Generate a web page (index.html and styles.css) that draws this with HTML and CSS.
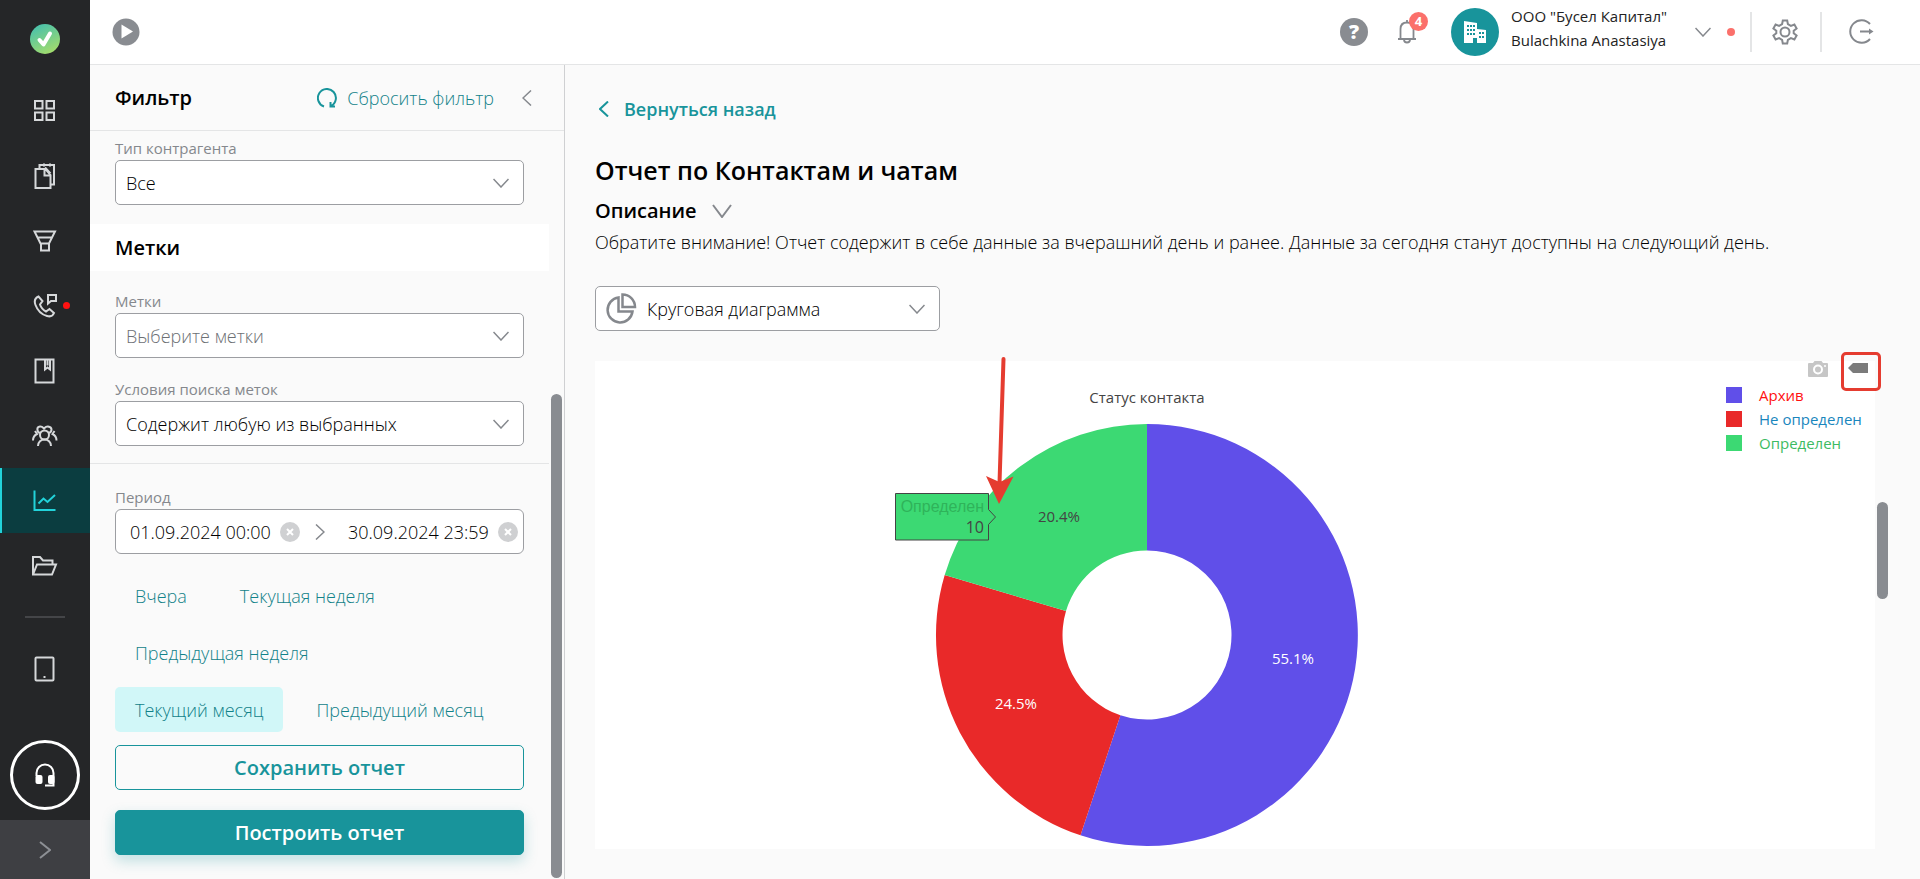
FILE: index.html
```html
<!DOCTYPE html>
<html lang="ru">
<head>
    <meta charset="UTF-8">
    <meta name="viewport" content="width=device-width, initial-scale=1.0">
    <title>Отчет по Контактам и чатам</title>
    <link rel="stylesheet" href="styles.css">
</head>
<body>
    <nav class="sidebar">
        <a href="#" class="logo" aria-label="Главная">
            <svg width="30" height="30" viewBox="0 0 30 30">
                <defs>
                    <linearGradient id="logoFill" x1="0.2" y1="0" x2="0.7" y2="1">
                        <stop offset="0" stop-color="#45bfae"/>
                        <stop offset="1" stop-color="#a5dd6b"/>
                    </linearGradient>
                </defs>
                <circle cx="15" cy="15" r="15" fill="url(#logoFill)"/>
                <path d="M9.500 16l4 4.500L20 9.500" fill="none" stroke="#fff" stroke-width="4" stroke-linecap="round" stroke-linejoin="round"/>
            </svg>
        </a>
        <a href="#" class="nav-item" aria-label="Рабочий стол">
            <svg width="26" height="26" viewBox="0 0 26 26"><path d="M3 3h7.500v7.500H3zM14.500 3H22v7.500h-7.500zM3 14.500h7.500V22H3zM14.500 14.500H22V22h-7.500z"/></svg>
        </a>
        <a href="#" class="nav-item" aria-label="Документы">
            <svg width="26" height="26" viewBox="0 0 26 26"><path d="M3.500 6h10l5 6v13h-15zM12.500 6v6.500h6M7.500 6V2H22v19.500h-3.500M12 .500v3M18 .500v3M13 4.500l5.500 6"/></svg>
        </a>
        <a href="#" class="nav-item" aria-label="Воронка">
            <svg width="26" height="26" viewBox="0 0 26 26"><path d="M2.500 3.500h20.500l-6 12H8.500zM5.500 9.500h14.500M9 15.500h8V22.500H9z"/></svg>
        </a>
        <a href="#" class="nav-item" aria-label="Звонки">
            <svg width="26" height="26" viewBox="0 0 26 26"><path d="M6.500 3.500C3 5 2 8 3.500 12c2 5.500 6 9.500 11.500 11 3.500 1 6-.500 7-3l-4.500-4-3.500 2.500c-3-1.500-5-4-6-7L10.500 8zM16 2h8v6h-5l-3 2.500z"/></svg>
            <span class="nav-dot"></span>
        </a>
        <a href="#" class="nav-item" aria-label="Справочник">
            <svg width="26" height="26" viewBox="0 0 26 26"><path d="M3.500 1.500h18v23h-18zM13 1.500v10l2.500-2 2.500 2v-10M15.500 1.500v6"/></svg>
        </a>
        <a href="#" class="nav-item" aria-label="Контакты">
            <svg width="26" height="26" viewBox="0 0 26 26"><circle cx="12.500" cy="12" r="4.500"/><path d="M6 23c0-4 3-6.500 6.500-6.500S19 19 19 23M8 10C5 9 4 4 8 3.500c2-.200 3 1 4 2 1-1 2-2.200 4-2C21 4 20 9 17 10M1 17.500c0-3 1-5 4-6.500l-2-3M24.500 17.500c0-3-1-5-4-6.500l2-3"/></svg>
        </a>
        <a href="#" class="nav-item active" aria-label="Отчеты">
            <svg width="26" height="26" viewBox="0 0 26 26"><path d="M2.500 2.500v19.500h21M6.500 15.500l5-5 4 3.500L23 7"/></svg>
        </a>
        <a href="#" class="nav-item" aria-label="Файлы">
            <svg width="26" height="26" viewBox="0 0 26 26"><path d="M1 21.500V4h7l3 3.500h9.500v4M1 21.500l4-10h19l-4 10z"/></svg>
        </a>
        <hr class="nav-line">
        <a href="#" class="nav-item" aria-label="Мобильная версия">
            <svg width="26" height="26" viewBox="0 0 26 26"><rect x="3.500" y="1.500" width="18" height="23" rx="1"/><path d="M11.500 21h2"/></svg>
        </a>
        <div class="nav-bottom">
            <button type="button" class="support" aria-label="Поддержка">
                <svg width="24" height="26" viewBox="0 0 24 26"><path d="M3.500 14v-3a8.500 8.500 0 0 1 17 0v12.500H12" fill="none" stroke="#fff" stroke-width="2"/><rect x="2.500" y="13" width="7" height="9" rx="2" fill="#fff"/><rect x="15" y="13" width="6.500" height="9" rx="2" fill="#fff"/></svg>
            </button>
            <button type="button" class="expand" aria-label="Развернуть меню">
                <svg width="12" height="18" viewBox="0 0 12 18"><path d="M1 1l10 8-10 8"/></svg>
            </button>
        </div>
    </nav>

    <div class="page">
        <header class="topbar">
            <button type="button" class="icon-btn" aria-label="Запустить">
                <svg width="28" height="28" viewBox="0 0 28 28"><circle cx="14" cy="14" r="13.500" fill="#898c91"/><path d="M9.500 6.500v14l11.500-7z" fill="#fff"/></svg>
            </button>
            <div class="topbar-right">
                <button type="button" class="help" aria-label="Помощь">?</button>
                <button type="button" class="bell" aria-label="Уведомления">
                    <svg width="20" height="28" viewBox="0 0 20 28"><path d="M1 21h18M3.500 21V11c0-4 2.500-6.500 6.500-6.500s6.500 2.500 6.500 6.500v10M10 4.500V2M7 21.500c0 4 6 4 6 0" fill="none" stroke="#85888d" stroke-width="1.800"/></svg>
                    <span class="badge">4</span>
                </button>
                <div class="avatar">
                    <svg width="24" height="24" viewBox="0 0 24 24"><path fill="#fff" d="M1 23V1l13 2v6l9 1v13h-9v-5h-4v5z"/><path stroke="#18949b" stroke-width="2" stroke-dasharray="2 1" d="M4 6h8M4 10h8M4 14h8M16 13h5M16 17h5"/></svg>
                </div>
                <div class="user">
                    <span>ООО "Бусел Капитал"</span>
                    <span>Bulachkina Anastasiya</span>
                </div>
                <button type="button" class="icon-btn user-menu" aria-label="Меню пользователя">
                    <svg class="chevron" width="16" height="10" viewBox="0 0 16 10"><path d="M.500 1L8 9l7.500-8"/></svg>
                </button>
                <span class="status-dot"></span>
                <button type="button" class="topbar-action" aria-label="Настройки">
                    <svg width="26" height="26" viewBox="0 0 26 26"><circle cx="13" cy="13" r="4.500"/><path d="M10.800 1.500h4.400l.700 3.700 3 1.700 3.500-1.300 2.200 3.800-2.900 2.400v2.400l2.900 2.400-2.200 3.800-3.500-1.300-3 1.700-.700 3.700h-4.400l-.700-3.700-3-1.700-3.500 1.300-2.200-3.800 2.900-2.400v-2.400L1.400 9.400l2.200-3.800 3.500 1.300 3-1.700z"/></svg>
                </button>
                <button type="button" class="topbar-action logout" aria-label="Выйти">
                    <svg width="26" height="26" viewBox="0 0 26 26"><path d="M22 5A11.300 11.300 0 1 0 22 20M12 12.500h9"/><path d="M21 9.500l4.500 3-4.500 3z" fill="#85888d" stroke="none"/></svg>
                </button>
            </div>
        </header>

        <div class="content">
            <aside class="filter">
                <div class="filter-head">
                    <h2>Фильтр</h2>
                    <button type="button" class="reset">
                        <svg width="20" height="20" viewBox="0 0 20 20"><path d="M7 18.500A9 9 0 1 1 14 18M13.500 14v4.500H18" fill="none" stroke="#18949b" stroke-width="2"/></svg>
                        Сбросить фильтр
                    </button>
                    <button type="button" class="icon-btn" aria-label="Свернуть фильтр">
                        <svg class="chevron" width="10" height="16" viewBox="0 0 10 16"><path d="M9 .500L1 8l8 7.500"/></svg>
                    </button>
                </div>
                <form class="filter-body">
                    <div class="field first">
                        <label for="type">Тип контрагента</label>
                        <div class="select">
                            <select id="type"><option>Все</option></select>
                            <svg class="chevron" width="16" height="10" viewBox="0 0 16 10"><path d="M.500 1L8 9l7.500-8"/></svg>
                        </div>
                    </div>
                    <h3>Метки</h3>
                    <div class="field">
                        <label for="tags">Метки</label>
                        <div class="select empty">
                            <select id="tags"><option>Выберите метки</option></select>
                            <svg class="chevron" width="16" height="10" viewBox="0 0 16 10"><path d="M.500 1L8 9l7.500-8"/></svg>
                        </div>
                    </div>
                    <div class="field">
                        <label for="cond">Условия поиска меток</label>
                        <div class="select">
                            <select id="cond"><option>Содержит любую из выбранных</option></select>
                            <svg class="chevron" width="16" height="10" viewBox="0 0 16 10"><path d="M.500 1L8 9l7.500-8"/></svg>
                        </div>
                    </div>
                    <hr class="filter-line">
                    <div class="field period">
                        <label for="dateFrom">Период</label>
                        <div class="range">
                            <input type="text" id="dateFrom" value="01.09.2024 00:00">
                            <button type="button" class="clear" aria-label="Очистить начало">
                                <svg width="8" height="8" viewBox="0 0 8 8"><path d="M1 1l6 6M7 1L1 7"/></svg>
                            </button>
                            <svg class="chevron" width="10" height="16" viewBox="0 0 10 16"><path d="M1 .500L9 8l-8 7.500"/></svg>
                            <input type="text" aria-label="Конец периода" value="30.09.2024 23:59">
                            <button type="button" class="clear" aria-label="Очистить конец">
                                <svg width="8" height="8" viewBox="0 0 8 8"><path d="M1 1l6 6M7 1L1 7"/></svg>
                            </button>
                        </div>
                    </div>
                    <div class="presets">
                        <div class="preset-row">
                            <button type="button">Вчера</button>
                            <button type="button">Текущая неделя</button>
                        </div>
                        <div class="preset-row">
                            <button type="button">Предыдущая неделя</button>
                        </div>
                        <div class="preset-row">
                            <button type="button" class="current">Текущий месяц</button>
                            <button type="button">Предыдущий месяц</button>
                        </div>
                    </div>
                    <div class="actions">
                        <button type="button" class="btn">Сохранить отчет</button>
                        <button type="submit" class="btn primary">Построить отчет</button>
                    </div>
                </form>
                <div class="scroll-thumb"></div>
            </aside>

            <main class="report">
                <a href="#" class="back">
                    <svg width="10" height="16" viewBox="0 0 10 16"><path d="M9 .500L1 8l8 7.500"/></svg>
                    Вернуться назад
                </a>
                <h1>Отчет по Контактам и чатам</h1>
                <button type="button" class="about">
                    Описание
                    <svg class="chevron" width="20" height="14" viewBox="0 0 20 14"><path d="M1 1l9 12 9-12"/></svg>
                </button>
                <p class="note">Обратите внимание! Отчет содержит в себе данные за вчерашний день и ранее. Данные за сегодня станут доступны на следующий день.</p>
                <div class="select chart-type">
                    <svg class="pie-icon" width="32" height="32" viewBox="0 0 32 32"><path d="M13.500 4.500A12.500 12.500 0 1 0 27.500 18.500H13.500zM17.500 1.500v12.500H30A12.500 12.500 0 0 0 17.500 1.500z"/></svg>
                    <select aria-label="Тип диаграммы"><option>Круговая диаграмма</option></select>
                    <svg class="chevron" width="16" height="10" viewBox="0 0 16 10"><path d="M.500 1L8 9l7.500-8"/></svg>
                </div>

                <section class="chart">
                    <div class="plot">
                        <svg class="donut" width="600" height="488" viewBox="0 0 600 488">
                            <text x="300" y="42" class="plot-title">Статус контакта</text>
                            <path fill="#604fe9" d="M300 63A211 211 0 1 1 233.500 474.300L273.400 354.200A84.500 84.500 0 1 0 300 189.500z"/>
                            <path fill="#e92929" d="M233.500 474.300A211 211 0 0 1 97.700 214L219 250A84.500 84.500 0 0 0 273.400 354.200z"/>
                            <path fill="#3cd973" d="M97.700 214A211 211 0 0 1 300 63V189.500A84.500 84.500 0 0 0 219 250z"/>
                            <text x="446" y="303" class="slice light">55.1%</text>
                            <text x="169" y="348" class="slice light">24.5%</text>
                            <text x="212" y="161" class="slice">20.4%</text>
                            <path class="hover-box" d="M48.500 132.500h93v16l7 7.500-7 7.500v15.500h-93z"/>
                            <text x="137" y="151" class="hover-name">Определен</text>
                            <text x="137" y="172" class="hover-value">10</text>
                            <path d="M156.500-2L152.500 122" stroke="#e53c30" stroke-width="4" stroke-linecap="round"/>
                            <path d="M139 115l13.500 6 14-5.500L152 143z" fill="#e53c30"/>
                        </svg>
                    </div>
                    <div class="side">
                        <div class="tools">
                            <button type="button" class="tool" aria-label="Скачать изображение">
                                <svg width="20" height="16" viewBox="0 0 20 16"><path fill="#c6c6c6" d="M1 2h4l1.500-2h7L15 2h4q1 0 1 1v12q0 1-1 1H1q-1 0-1-1V3q0-1 1-1z"/><circle cx="10" cy="8.500" r="4" fill="none" stroke="#fff" stroke-width="2"/><circle cx="17" cy="5" r="1" fill="#fff"/></svg>
                            </button>
                            <button type="button" class="tool marked" aria-label="Показать подпись">
                                <svg width="20" height="10" viewBox="0 0 20 10"><path fill="#7b7b7b" d="M0 5l5-5h15v10H5z"/></svg>
                            </button>
                        </div>
                        <ul class="legend">
                            <li class="archive">Архив</li>
                            <li class="unknown">Не определен</li>
                            <li class="known">Определен</li>
                        </ul>
                    </div>
                </section>
                <div class="scroll-thumb"></div>
            </main>
        </div>
    </div>
</body>
</html>
```
FILE: styles.css
```css
*, *::before, *::after {
    box-sizing: border-box;
}
body {
    margin: 0;
    min-height: 100vh;
    display: flex;
    background: #fafafa;
    color: #000;
    font-family: "Open Sans", "Noto Sans", sans-serif;
    font-size: 18px;
    font-weight: 300;
    line-height: 24px;
}
button, input, select {
    font: inherit;
    color: inherit;
    margin: 0;
    padding: 0;
    border: 0;
    background: none;
}
button {
    cursor: pointer;
}
svg {
    display: block;
    flex: none;
}
a {
    text-decoration: none;
}
h1, h2, h3, p, hr, ul {
    margin: 0;
    padding: 0;
}
hr {
    border: 0;
}
.chevron {
    fill: none;
    stroke: #85888d;
    stroke-width: 1.5;
}

/* left menu */
.sidebar {
    width: 90px;
    flex: none;
    display: flex;
    flex-direction: column;
    background: #252628;
}
.logo {
    height: 78px;
    display: flex;
    align-items: center;
    justify-content: center;
}
.nav-item {
    position: relative;
    height: 65px;
    flex: none;
    display: flex;
    align-items: center;
    justify-content: center;
    fill: none;
    stroke: #d6d8da;
    stroke-width: 2;
}
.nav-item.active {
    background: #0b3d40;
    stroke: #22d3da;
    box-shadow: inset 2px 0 #22d3da;
}
.nav-dot {
    position: absolute;
    left: 63px;
    top: 29px;
    width: 7px;
    height: 7px;
    border-radius: 50%;
    background: #f11;
}
.nav-line {
    width: 40px;
    height: 2px;
    margin: 18px auto;
    background: #444548;
}
.nav-bottom {
    margin-top: auto;
}
.support {
    width: 70px;
    height: 70px;
    margin: 0 auto 10px;
    display: flex;
    align-items: center;
    justify-content: center;
    border: 3px solid #fff;
    border-radius: 50%;
}
.expand {
    width: 100%;
    height: 60px;
    display: flex;
    align-items: center;
    justify-content: center;
    background: #3e3f43;
    fill: none;
    stroke: #8d9095;
    stroke-width: 2;
}

/* top bar */
.page {
    flex: 1;
    min-width: 0;
    display: flex;
    flex-direction: column;
}
.topbar {
    height: 65px;
    display: flex;
    align-items: center;
    justify-content: space-between;
    padding: 0 46px 0 22px;
    background: #fff;
    border-bottom: 1px solid #e4e5e6;
}
.topbar-right {
    display: flex;
    align-items: center;
}
.help {
    width: 28px;
    height: 28px;
    border-radius: 50%;
    background: #898c91;
    color: #fff;
    font-size: 20px;
    font-weight: 800;
}
.bell {
    position: relative;
    margin: 0 34px 0 29px;
}
.badge {
    position: absolute;
    left: 12px;
    top: -6px;
    width: 19px;
    height: 19px;
    border-radius: 50%;
    background: #fb706b;
    color: #fff;
    font-size: 13px;
    font-weight: 700;
    line-height: 19px;
    text-align: center;
}
.avatar {
    width: 48px;
    height: 48px;
    display: flex;
    align-items: center;
    justify-content: center;
    border-radius: 50%;
    background: #18949b;
}
.user {
    margin: -8px 28px 0 12px;
    display: flex;
    flex-direction: column;
    font-size: 15px;
    font-weight: 400;
    color: #222;
}
.status-dot {
    width: 8px;
    height: 8px;
    margin: 0 15px 0 16px;
    border-radius: 50%;
    background: #fb706b;
}
.topbar-action {
    width: 70px;
    height: 40px;
    display: flex;
    align-items: center;
    justify-content: center;
    padding-right: 3px;
    border-left: 2px solid #e4e5e6;
    fill: none;
    stroke: #85888d;
    stroke-width: 2;
}
.logout {
    width: 54px;
    padding: 0;
    justify-content: flex-end;
}

/* filter panel */
.content {
    flex: 1;
    display: flex;
}
.filter {
    position: relative;
    width: 475px;
    flex: none;
    border-right: 1px solid #cfd0d2;
}
.filter-head {
    height: 66px;
    display: flex;
    align-items: center;
    padding: 0 32px 0 25px;
    border-bottom: 1px solid #e4e5e6;
}
h2, h3 {
    font-size: 20px;
    font-weight: 600;
    line-height: 28px;
}
.reset {
    margin: 0 28px 0 auto;
    display: flex;
    align-items: center;
    gap: 10px;
    color: #128289;
}
.filter-body {
    padding-right: 15px;
}
.field {
    padding: 20px 25px 0;
}
.field.first {
    padding-top: 7px;
}
.field label {
    display: block;
    padding-bottom: 1px;
    font-size: 15px;
    font-weight: 400;
    line-height: 21px;
    color: #85888d;
}
.field + .field {
    padding-top: 21px;
}
.select {
    height: 45px;
    position: relative;
    display: flex;
    align-items: center;
    background: #fff;
    border: 1px solid #9c9ea2;
    border-radius: 5px;
}
.select select {
    flex: 1;
    height: 100%;
    padding: 0 10px;
    appearance: none;
    outline: 0;
}
.select .chevron {
    margin-right: 14px;
}
.select.empty {
    color: #6c6f74;
}
h3 {
    margin: 19px 0 0;
    padding: 10px 25px 9px;
    background: #fff;
}
.filter-line {
    height: 1px;
    margin-top: 17px;
    background: #e4e5e6;
}
.period {
    padding-top: 23px;
}
.range {
    height: 45px;
    display: flex;
    align-items: center;
    padding: 0 5px 0 14px;
    background: #fff;
    border: 1px solid #9c9ea2;
    border-radius: 6px;
}
.range input {
    width: 150px;
    flex: 1;
    min-width: 0;
    outline: 0;
}
.range .chevron {
    margin: 0 23px 0 15px;
}
.clear {
    width: 20px;
    height: 20px;
    display: flex;
    align-items: center;
    justify-content: center;
    border-radius: 50%;
    background: #cfd0d2;
    stroke: #fff;
    stroke-width: 2;
}
.presets {
    display: flex;
    flex-direction: column;
    gap: 12px;
    margin: 19px 25px 12px;
}
.preset-row {
    display: flex;
    gap: 13px;
}
.presets button {
    height: 45px;
    padding: 0 20px;
    border-radius: 5px;
    color: #128289;
}
.presets .current {
    background: #d1f7f8;
}
.actions {
    padding: 1px 25px 25px;
    display: flex;
    flex-direction: column;
    gap: 20px;
}
.btn {
    height: 45px;
    border: 1px solid #18949b;
    border-radius: 5px;
    color: #18949b;
    font-size: 20px;
    font-weight: 600;
}
.btn.primary {
    background: #18949b;
    color: #fff;
    box-shadow: 0 6px 14px rgba(24, 148, 155, 0.25);
}
.scroll-thumb {
    position: absolute;
    width: 11px;
    border-radius: 6px;
    background: #898c91;
}
.filter .scroll-thumb {
    right: 2px;
    bottom: 2px;
    height: 484px;
}

/* report */
.report {
    position: relative;
    flex: 1;
    min-width: 0;
    padding: 32px 45px 30px 30px;
}
.report > .scroll-thumb {
    right: 32px;
    top: 437px;
    height: 97px;
}
.back {
    display: flex;
    align-items: center;
    gap: 15px;
    padding-left: 4px;
    color: #18949b;
    font-weight: 600;
}
.back svg {
    fill: none;
    stroke: #18949b;
    stroke-width: 2;
}
h1 {
    margin-top: 33px;
    font-size: 25px;
    font-weight: 600;
    line-height: 32px;
}
.about {
    margin: 11px 0 5px;
    display: flex;
    align-items: center;
    gap: 15px;
    font-size: 20px;
    font-weight: 600;
    line-height: 28px;
}
.about .chevron {
    stroke-width: 2;
}
.chart-type {
    width: 345px;
    margin: 32px 0 30px;
    padding-left: 9px;
}
.pie-icon {
    fill: none;
    stroke: #85888d;
    stroke-width: 2.5;
}
.chart {
    display: flex;
    background: #fff;
}
.plot {
    flex: 1;
    display: flex;
    justify-content: center;
}
.donut {
    overflow: visible;
}
.donut text {
    font-size: 15px;
    font-weight: 400;
    fill: #444;
}
.donut .plot-title, .donut .slice {
    text-anchor: middle;
}
.donut .light {
    fill: #fff;
}
.hover-box {
    fill: #3cd973;
    stroke: #444;
}
.donut .hover-name, .donut .hover-value {
    font-size: 16px;
    text-anchor: end;
}
.donut .hover-name {
    font-family: "Liberation Sans", Arial, sans-serif;
    fill: #2fb35a;
}
.side {
    width: 176px;
}
.tools {
    height: 22px;
    display: flex;
    justify-content: flex-end;
}
.tool {
    height: 16px;
    margin-right: 20px;
}
.tool.marked {
    position: relative;
    height: 14px;
    margin-right: 7px;
}
.tool.marked::after {
    content: "";
    position: absolute;
    left: -7px;
    top: -9px;
    width: 40px;
    height: 39px;
    border: 3px solid #e53c30;
    border-radius: 5px;
}
.legend {
    list-style: none;
    font-size: 15px;
    font-weight: 400;
}
.legend li {
    display: flex;
    align-items: center;
    gap: 17px;
    padding-left: 27px;
}
.legend li::before {
    content: "";
    width: 16px;
    height: 16px;
    background: #604fe9;
}
.legend .archive {
    color: #f11;
}
.legend .unknown {
    color: #1a86bd;
}
.legend .unknown::before {
    background: #e92929;
}
.legend .known {
    color: #3dbb62;
}
.legend .known::before {
    background: #3cd973;
}
```
